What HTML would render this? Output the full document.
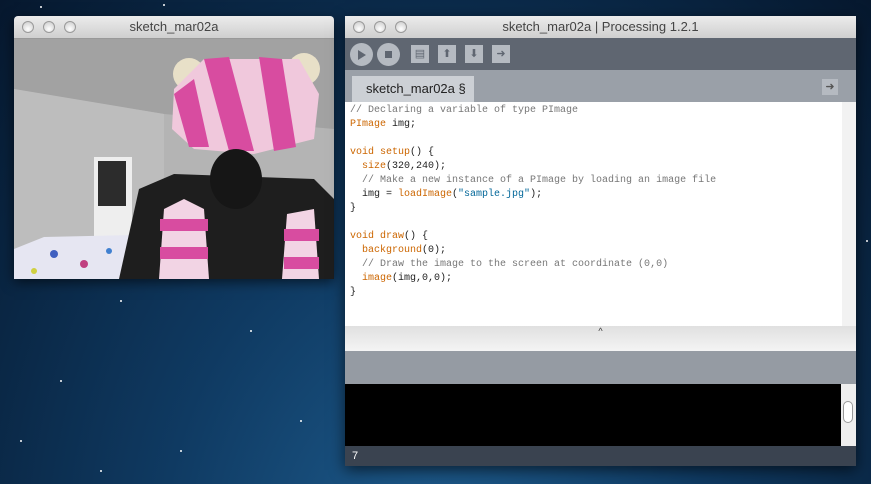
<!DOCTYPE html><html><head><style>
body{margin:0;width:871px;height:484px;overflow:hidden;background:radial-gradient(ellipse at 50% 120%,#1f5e90 0%,#0f3a62 45%,#06182e 100%);position:relative;font-family:"Liberation Sans",sans-serif}
.abs{position:absolute}
.tb{background:linear-gradient(#ececec,#cfcfcf);border-bottom:1px solid #999;height:22px;border-radius:4px 4px 0 0;text-align:center;font-size:13px;color:#444;line-height:22px}
.dot{position:absolute;top:5px;width:12px;height:12px;border-radius:50%;background:radial-gradient(circle at 50% 70%,#fff,#c8c8c8);border:1px solid #9a9a9a;box-sizing:border-box}
pre{margin:0;font-family:"Liberation Mono",monospace;font-size:10px;line-height:14px;color:#222}
.c{color:#777}.k{color:#cc6600}.s{color:#006699}
.btn{position:absolute;width:18px;height:18px;background:#b5bac1;color:#5f6671;font-size:11px;text-align:center;line-height:18px}
.star{position:absolute;width:2px;height:2px;background:#fff;border-radius:50%}
</style></head><body>
<div class="star" style="left:40px;top:6px"></div><div class="star" style="left:163px;top:4px"></div><div class="star" style="left:120px;top:300px"></div><div class="star" style="left:250px;top:330px"></div><div class="star" style="left:60px;top:380px"></div><div class="star" style="left:300px;top:420px"></div><div class="star" style="left:180px;top:450px"></div><div class="star" style="left:866px;top:240px"></div><div class="star" style="left:20px;top:440px"></div><div class="star" style="left:100px;top:470px"></div>
<div class="abs" style="left:14px;top:16px;width:320px;height:262px;box-shadow:0 4px 12px rgba(0,0,0,.6)">
<div class="tb">sketch_mar02a</div>
<div class="dot" style="left:8px"></div><div class="dot" style="left:29px"></div><div class="dot" style="left:50px"></div>
<svg width="320" height="240" style="display:block" viewBox="0 0 320 240">
<rect width="320" height="240" fill="#b4b4b4"/>
<path d="M0 0 L320 0 L320 90 L150 75 L0 50Z" fill="#a2a2a2"/>
<path d="M0 50 L150 75 L150 240 L0 240Z" fill="#bdbdbd"/>
<rect x="80" y="118" width="38" height="85" fill="#eeeeee"/><rect x="84" y="122" width="28" height="45" fill="#2c2c2c"/>
<path d="M0 240 L0 210 L30 198 L120 196 L135 240Z" fill="#e6e6f2"/>
<circle cx="40" cy="215" r="4" fill="#4060c0"/><circle cx="70" cy="225" r="4" fill="#c04080"/><circle cx="20" cy="232" r="3" fill="#d0d040"/><circle cx="95" cy="212" r="3" fill="#4080d0"/>
<path d="M105 240 L125 150 L160 135 L300 140 L320 160 L320 240Z" fill="#1e1e1e"/>
<path d="M145 240 L150 170 L170 160 L190 170 L195 240Z" fill="#f2d4e4"/>
<rect x="146" y="180" width="48" height="12" fill="#d84ca0"/><rect x="146" y="208" width="48" height="12" fill="#d84ca0"/>
<path d="M268 240 L273 175 L300 170 L305 240Z" fill="#f2d4e4"/>
<rect x="270" y="190" width="35" height="12" fill="#d84ca0"/><rect x="270" y="218" width="35" height="12" fill="#d84ca0"/>
<circle cx="175" cy="35" r="16" fill="#e8e0c8"/><circle cx="290" cy="30" r="16" fill="#e8e0c8"/>
<path d="M160 50 L190 20 L285 20 L305 55 L300 100 L240 115 L180 110 L158 90Z" fill="#f0c8dc"/>
<path d="M190 20 L215 18 L240 112 L215 112Z" fill="#d84ca0"/><path d="M245 18 L268 20 L282 108 L260 112Z" fill="#d84ca0"/><path d="M160 55 L180 40 L195 108 L175 108Z" fill="#d84ca0"/>
<ellipse cx="222" cy="140" rx="26" ry="30" fill="#161616"/>
</svg></div>
<div class="abs" style="left:345px;top:16px;width:511px;height:450px;box-shadow:0 4px 14px rgba(0,0,0,.6);background:#e8e8e8">
<div class="tb">sketch_mar02a | Processing 1.2.1</div>
<div class="dot" style="left:8px"></div><div class="dot" style="left:29px"></div><div class="dot" style="left:50px"></div>
<div class="abs" style="top:22px;left:0;width:511px;height:32px;background:#5f6671"></div>
<div class="abs" style="top:27px;left:5px;width:23px;height:23px;border-radius:50%;background:#b5bac1"></div>
<div class="abs" style="top:27px;left:32px;width:23px;height:23px;border-radius:50%;background:#b5bac1"></div>
<div class="abs" style="top:34px;left:13px;width:0;height:0;border-left:8px solid #5f6671;border-top:5px solid transparent;border-bottom:5px solid transparent"></div>
<div class="abs" style="top:35px;left:40px;width:7px;height:7px;background:#5f6671"></div>
<div class="btn" style="left:66px;top:29px">▤</div><div class="btn" style="left:93px;top:29px">⬆</div><div class="btn" style="left:120px;top:29px">⬇</div><div class="btn" style="left:147px;top:29px">➜</div>
<div class="abs" style="top:54px;left:0;width:511px;height:32px;background:#9aa0a8"></div>
<div class="abs" style="top:60px;left:7px;width:122px;height:26px;background:#ccd0d5;font-size:13px;line-height:26px;text-indent:14px;color:#222">sketch_mar02a §</div>
<div class="abs" style="top:63px;left:477px;width:16px;height:16px;background:#b5bac1;font-size:11px;text-align:center;color:#555;line-height:16px">➜</div>
<div class="abs" style="top:86px;left:0;width:497px;height:224px;background:#fff">
<pre style="padding:0 0 0 5px;margin-top:2px"><span class="c">// Declaring a variable of type PImage</span>
<span class="k">PImage</span> img;

<span class="k">void</span> <span class="k">setup</span>() {
  <span class="k">size</span>(320,240);
  <span class="c">// Make a new instance of a PImage by loading an image file</span>
  img = <span class="k">loadImage</span>(<span class="s">"sample.jpg"</span>);
}

<span class="k">void</span> <span class="k">draw</span>() {
  <span class="k">background</span>(0);
  <span class="c">// Draw the image to the screen at coordinate (0,0)</span>
  <span class="k">image</span>(img,0,0);
}</pre></div>
<div class="abs" style="top:86px;left:497px;width:14px;height:224px;background:#f2f2f2"></div>
<div class="abs" style="top:310px;left:0;width:511px;height:25px;background:linear-gradient(#e0e0e0,#f4f4f4);font-size:9px;text-align:center;color:#333">^</div>
<div class="abs" style="top:335px;left:0;width:511px;height:33px;background:#959ba3"></div>
<div class="abs" style="top:368px;left:0;width:496px;height:62px;background:#000"></div>
<div class="abs" style="top:368px;left:496px;width:15px;height:62px;background:#eee"></div>
<div class="abs" style="top:385px;left:498px;width:10px;height:22px;border-radius:5px;border:1px solid #999;background:#fff;box-sizing:border-box"></div>
<div class="abs" style="top:430px;left:0;width:511px;height:20px;background:#3a4350;color:#fff;font-size:11px;line-height:20px;text-indent:7px">7</div>
</div>
</body></html>
